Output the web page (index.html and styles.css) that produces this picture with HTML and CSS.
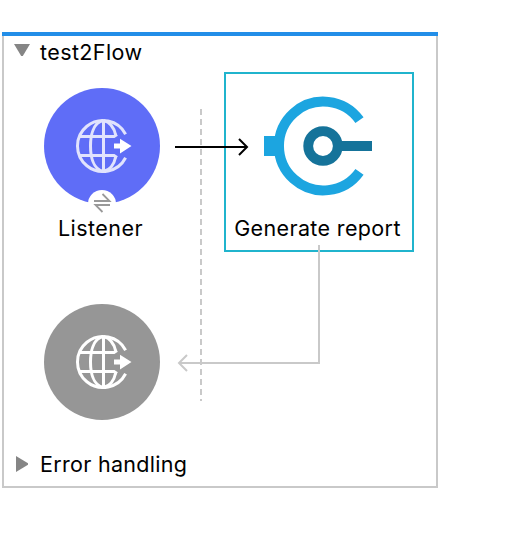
FILE: index.html
```
<!DOCTYPE html>
<html lang="en">
<head>
<meta charset="utf-8">
<title>test2Flow</title>
<link rel="stylesheet" href="styles.css">
</head>
<body>
<svg class="defs" width="0" height="0" aria-hidden="true">
  <symbol id="globe" viewBox="0 0 116 116">
    <g fill="none" stroke="currentColor" stroke-width="3">
      <path d="M81.600 46.200A25.500 25.500 0 1 0 81.600 69.800"/>
      <path d="M59.500 32.500V83.500"/>
      <path d="M59 32.500C49 35 46.500 48 46.500 58S49 81 59 83.500"/>
      <path d="M59.500 32.500C66 34 70 39 71.800 47.500M59.500 83.500C66 82 70 77 71.800 68.500"/>
      <path d="M35.500 48.500H70L73 46.500M35.500 67.500H70L73 69.500"/>
    </g>
    <path fill="#fff" d="M70 55.400H76V50.800L87.500 58L76 65.500V60.600H70Z"/>
  </symbol>
</svg>
<main class="flow">
  <header class="bar">
    <svg class="twisty" viewBox="0 0 16 14"><path d="M0 1H16L8.800 13H7.200Z"/></svg>
    <span class="label title">test2Flow</span>
  </header>
  <section class="canvas">
    <div class="node source">
      <svg class="disc" viewBox="0 0 116 116">
        <circle cx="58" cy="58" r="58" fill="#5f6df7"/>
        <use href="#globe" width="116" height="116"/>
      </svg>
      <svg class="exchange" viewBox="0 0 28 28">
        <circle cx="14" cy="14" r="14" fill="#fff"/>
        <path d="M6 11H21.500L14.500 4M22 15H7.500L14.500 22" fill="none" stroke="#999" stroke-width="1.800"/>
      </svg>
      <span class="label listener">Listener</span>
    </div>
    <div class="node selected">
      <svg class="connector" viewBox="0 0 110 100">
        <path d="M95.500 24.200A44.400 44.400 0 1 0 95.500 75.800" fill="none" stroke="#1ca5e0" stroke-width="10"/>
        <path d="M0 40H13V60H0Z" fill="#1ca5e0"/>
        <circle cx="59" cy="50" r="14.800" fill="none" stroke="#15739a" stroke-width="9.800"/>
        <path d="M76 45H108V55H76Z" fill="#15739a"/>
      </svg>
      <span class="label generate">Generate report</span>
    </div>
    <div class="node response">
      <svg class="disc" viewBox="0 0 116 116">
        <circle cx="58" cy="58" r="58" fill="#969696"/>
        <use href="#globe" width="116" height="116"/>
      </svg>
    </div>
  </section>
  <footer class="bar">
    <svg class="twisty closed" viewBox="0 0 14 16"><path d="M1 0V16L13 8.800V7.200Z"/></svg>
    <span class="label error">Error handling</span>
  </footer>
  <svg class="edges" viewBox="0 0 522 546" fill="none" stroke-width="2">
    <path d="M201 109V401" stroke="#c9c9c9" stroke-dasharray="6 4"/>
    <path d="M175 147H247M239 139L247 147L239 155" stroke="#000"/>
    <path d="M319 245V363H179M187 355L179 363L187 371" stroke="#c9c9c9"/>
  </svg>
</main>
</body>
</html>
```

FILE: styles.css
```
* { box-sizing: border-box; }
body {
  margin: 0;
  padding: 32px 0 0 2px;
  background: #fff;
  color: #000;
  font-family: Inter, "Liberation Sans", sans-serif;
}
.defs { position: absolute; }
svg { display: block; flex: none; }
.flow {
  width: 436px;
  height: 456px;
  border: 2px solid #c9c9c9;
  border-top: 0;
  display: flex;
  flex-direction: column;
}
.flow::before {
  content: "";
  flex: none;
  height: 4px;
  margin: 0 -2px;
  background: #228ee8;
}
.label {
  font-size: 21.5px;
  line-height: 28px;
  white-space: nowrap;
}
.bar {
  display: flex;
  height: 32px;
  padding: 2px 0 0 10px;
}
.twisty {
  width: 16px;
  height: 14px;
  margin: 5px 10px 0 0;
  fill: #858585;
}
.twisty.closed {
  width: 14px;
  height: 16px;
  margin: 6px 11px 0 1px;
}
.canvas {
  display: grid;
  grid-template-columns: 116px 190px;
  grid-template-rows: 180px 116px;
  column-gap: 64px;
  row-gap: 52px;
  height: 380px;
  padding: 4px 0 0 40px;
}
.node {
  display: flex;
  flex-direction: column;
  align-items: center;
}
.disc { width: 116px; height: 116px; color: #e1e3fd; }
.source { position: relative; padding-top: 16px; }
.source .label { margin-top: 10px; }
.response .disc { color: #fff; }
.exchange {
  position: absolute;
  top: 118px;
  left: 44px;
  width: 28px;
  height: 28px;
}
.selected { border: 2px solid #20b4cd; padding-top: 22px; }
.connector { width: 110px; height: 100px; }
.selected .label { margin-top: 18px; }
.edges {
  position: absolute;
  top: 0;
  left: 0;
  width: 522px;
  height: 546px;
  pointer-events: none;
}
.title { letter-spacing: 0.4px; }
.listener { letter-spacing: 0.45px; margin-right: 3px; }
.generate { letter-spacing: 0.36px; margin-right: 3px; }
.error { letter-spacing: 0.3px; }
```
